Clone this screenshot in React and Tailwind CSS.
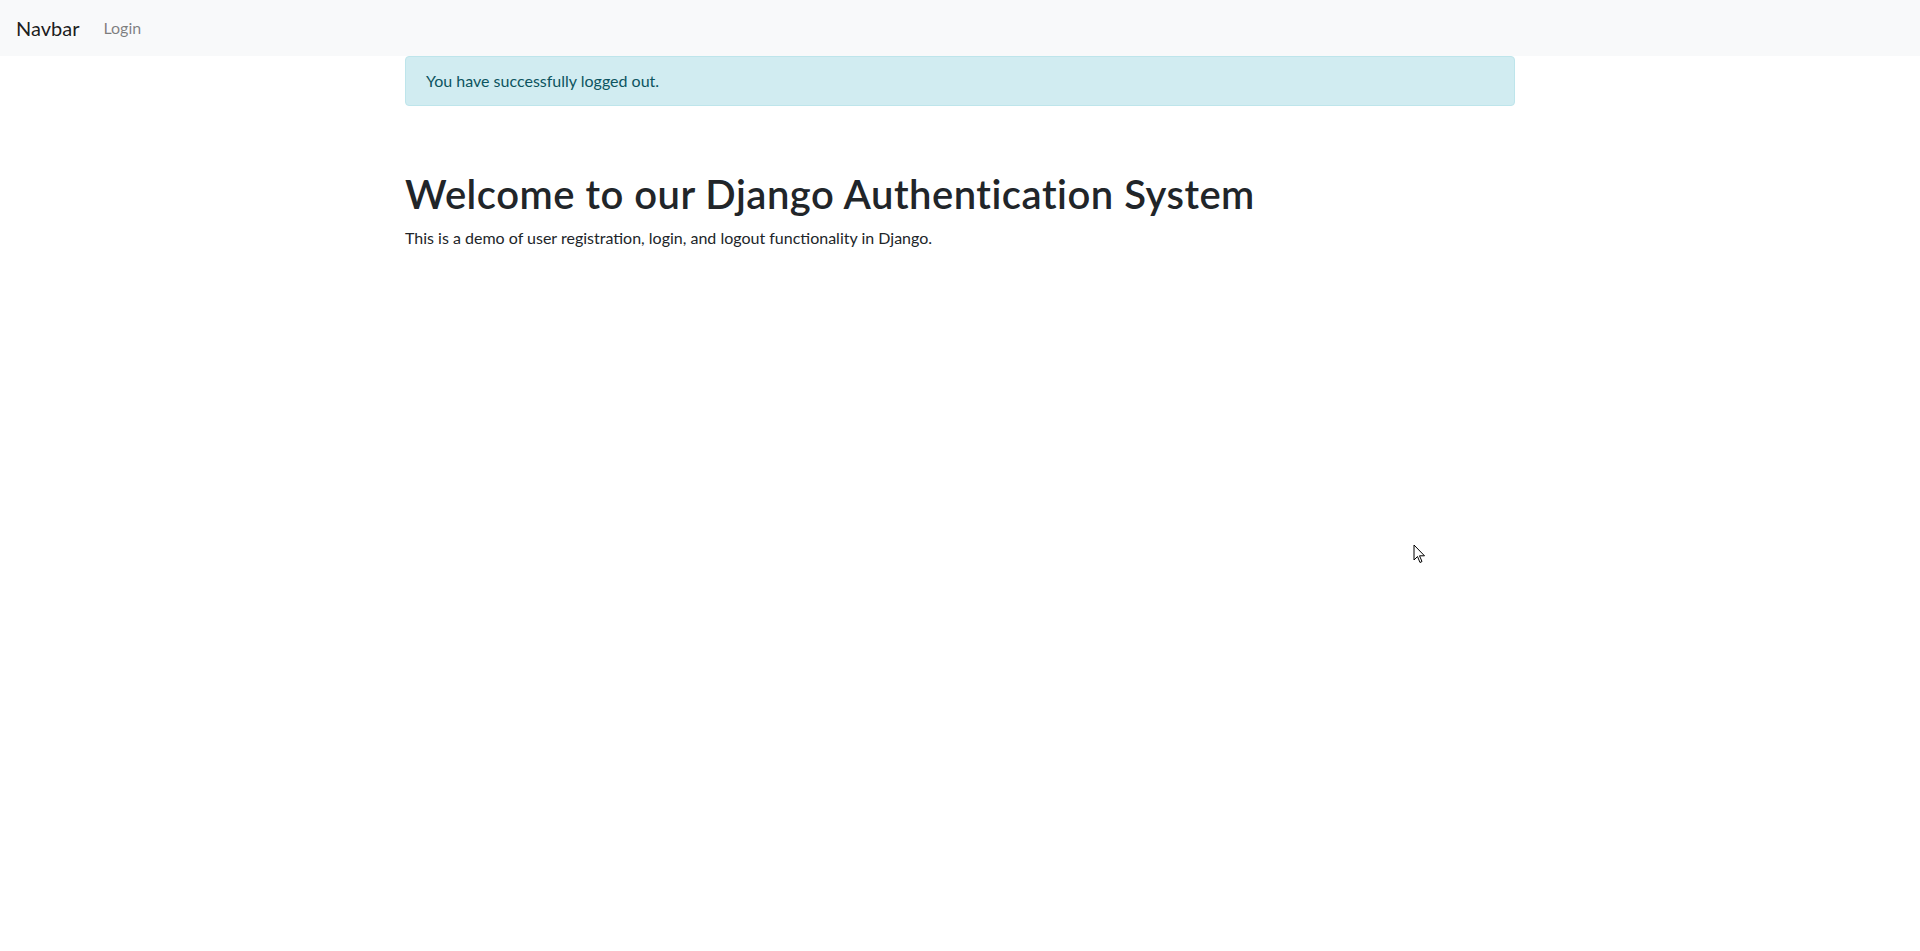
export default function App() {
  return (
    <div className="min-h-screen bg-white text-[#212529] font-['Lato','Open_Sans',sans-serif] text-base leading-6 relative">
      <nav className="bg-[#f8f9fa] px-4 py-2 flex items-center">
        <a href="#" className="text-xl leading-[30px] py-[5px] mr-4 text-black/90">Navbar</a>
        <a href="#" className="px-2 py-2 text-black/50">Login</a>
      </nav>

      <div className="max-w-[1140px] mx-auto px-[15px]">
        <div className="bg-[#d1ecf1] border border-[#bee5eb] text-[#0c5460] rounded px-5 py-3 mb-4">
          You have successfully logged out.
        </div>

        <div className="pt-12">
          <h1 className="mb-2 text-[40px] leading-[48px] font-semibold tracking-[0.5px]">Welcome to our Django Authentication System</h1>
          <p>This is a demo of user registration, login, and logout functionality in Django.</p>
        </div>
      </div>

      <svg className="absolute left-[1413px] top-[544px]" width="13" height="20" viewBox="0 0 13 20">
        <path d="M1 1 L1 16 L4.5 12.5 L7 18.5 L9 17.5 L6.5 11.8 L11.5 11.8 Z" fill="white" stroke="black" strokeWidth="1" strokeLinejoin="miter" />
      </svg>
    </div>
  )
}
